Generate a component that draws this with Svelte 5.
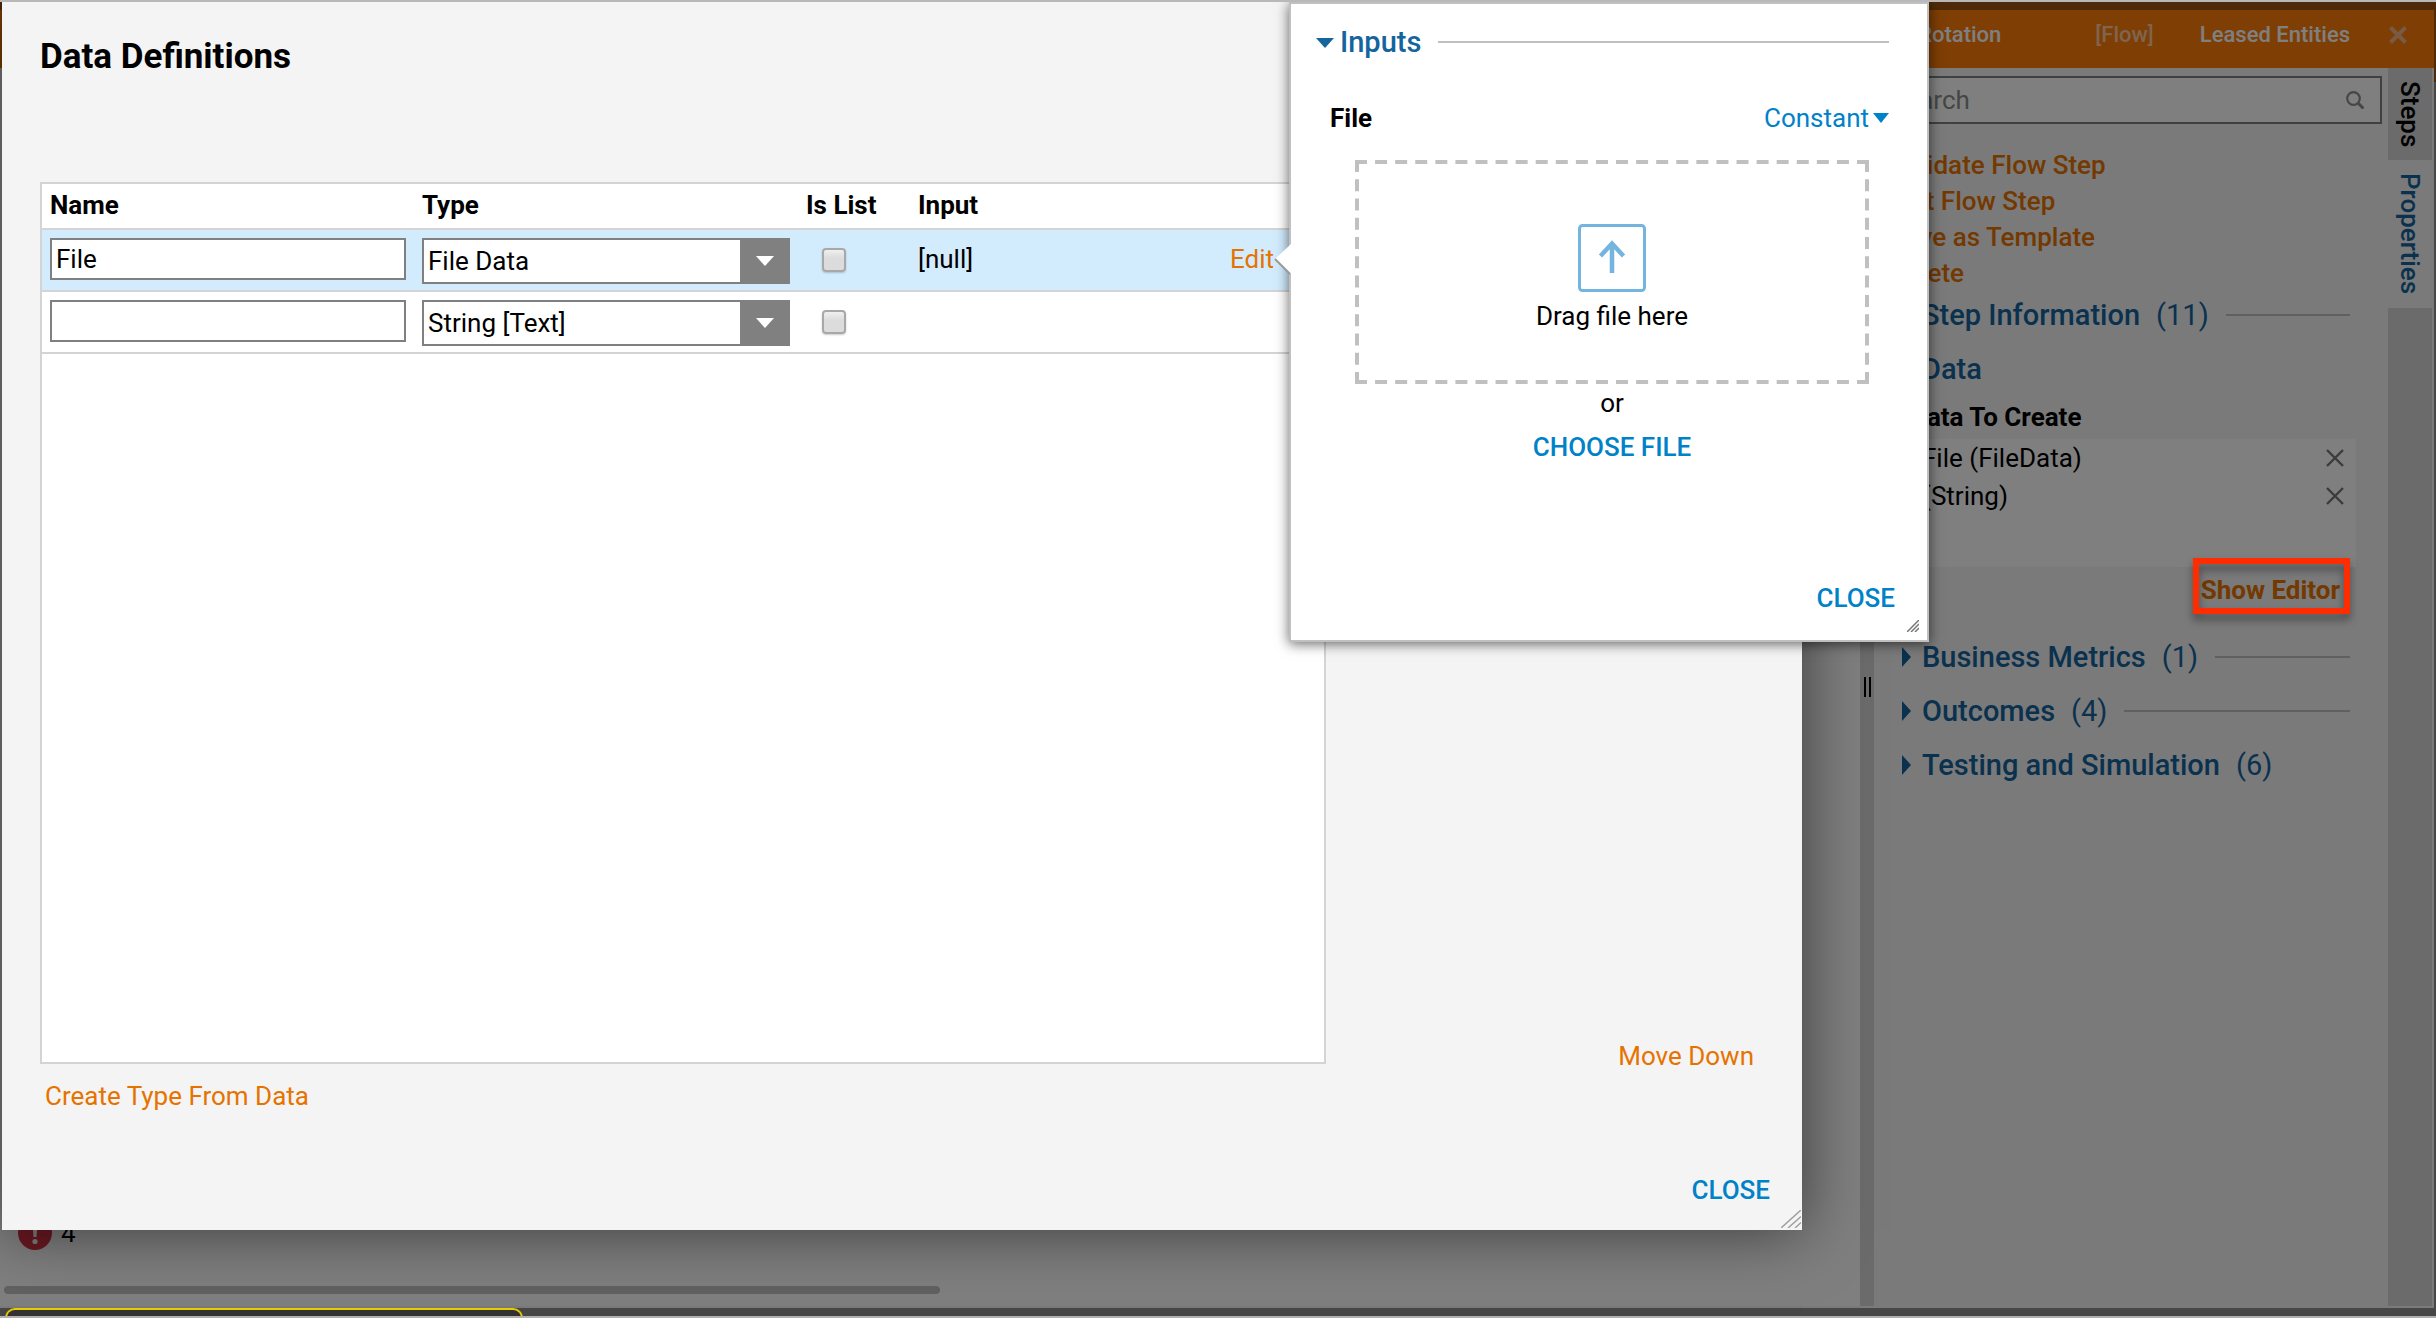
<script lang="ts">
  type Row = { id: number; name: string; type: string; isList: boolean; input: string | null };

  const TYPES = ["File Data", "String [Text]"];
  const ACTIONS = ["Validate Flow Step", "Edit Flow Step", "Save as Template", "Delete"];
  const SECTIONS = [
    { title: "Business Metrics", count: 1, rule: true },
    { title: "Outcomes", count: 4, rule: true },
    { title: "Testing and Simulation", count: 6, rule: false },
  ];

  let rows = $state<Row[]>([
    { id: 1, name: "File", type: "File Data", isList: false, input: "[null]" },
    { id: 2, name: "", type: "String [Text]", isList: false, input: null },
  ]);
  let created = $state(["File (FileData)", "(String)"]);
  let selected = $state(1);
  let search = $state("");

  function removeCreated(item: string): void {
    created = created.filter((c) => c !== item);
  }
</script>

{#snippet sectionHead(title: string, count: number | null, rule: boolean, open: boolean)}
  <button type="button" class="section" aria-expanded={open}>
    {#if open}
      <svg class="tri" width="18" height="20" viewBox="0 0 18 20"><path d="M0 6h18l-9 10z" /></svg>
    {:else}
      <svg class="tri" width="9" height="20" viewBox="0 0 9 20"><path d="M0 0l9 10-9 10z" /></svg>
    {/if}
    <span>{title}</span>
    {#if count !== null}<span class="count">({count})</span>{/if}
    {#if rule}<span class="rule"></span>{/if}
  </button>
{/snippet}

<div class="screen">
  <div class="frame">
    <header>
      <span class="flow-name">Rotation</span>
      <span class="kind">[Flow]</span>
      <span class="folder">Leased Entities</span>
      <button type="button" aria-label="Close flow">
        <svg width="18" height="18" viewBox="0 0 18 18"><path d="M1.500 1.500l15 15M16.500 1.500l-15 15" stroke="#f0b48a" stroke-width="4" /></svg>
      </button>
    </header>

    <div class="workspace">
      <main>
        <div class="errors">
          <svg width="34" height="34" viewBox="0 0 34 34">
            <circle cx="17" cy="17" r="17" fill="#d63344" />
            <path d="M14.500 7h5l-1 14h-3z" fill="#fff" /><circle cx="17" cy="25.500" r="2.600" fill="#fff" />
          </svg>
          <span>4</span>
        </div>
        <div class="scroll"></div>
      </main>

      <div class="splitter"><span></span><span></span></div>

      <aside>
        <div class="search">
          <input type="text" placeholder="Search" aria-label="Search properties" bind:value={search} />
          <svg width="18" height="18" viewBox="0 0 18 18" fill="none" stroke="#8c8c8c" stroke-width="2.200">
            <circle cx="7.500" cy="7.500" r="6.300" /><path d="M12 12l5.500 5.500" stroke-width="3" />
          </svg>
        </div>
        <nav>
          {#each ACTIONS as action}
            <a href="#action">{action}</a>
          {/each}
        </nav>
        <div class="sections">
          {@render sectionHead("Step Information", 11, true, false)}
          {@render sectionHead("Data", null, false, false)}
        </div>
        <div class="data">
          <h3>Data To Create</h3>
          <ul>
            {#each created as item}
              <li>
                <span>{item}</span>
                <button type="button" aria-label="Remove {item}" onclick={() => removeCreated(item)}>
                  <svg width="18" height="18" viewBox="0 0 18 18"><path d="M1 1l16 16M17 1L1 17" stroke="#777" stroke-width="2.400" /></svg>
                </button>
              </li>
            {/each}
          </ul>
          <div class="show">
            <button type="button">Show Editor</button>
            <span class="highlight"></span>
          </div>
        </div>
        <div class="sections">
          {#each SECTIONS as s}
            {@render sectionHead(s.title, s.count, s.rule, false)}
          {/each}
        </div>
      </aside>

      <div class="tabs" role="tablist">
        <button type="button" role="tab" aria-selected="false">Steps</button>
        <button type="button" role="tab" aria-selected="true" class="on">Properties</button>
      </div>
    </div>
  </div>

  <div class="dim"></div>
  <div class="toast"></div>

  <section class="dialog" role="dialog" aria-labelledby="dd-title">
    <h1 id="dd-title">Data Definitions</h1>
    <div class="body">
      <div class="panel">
        <table>
          <thead>
            <tr>
              <th class="c-name">Name</th>
              <th class="c-type">Type</th>
              <th class="c-list">Is List</th>
              <th>Input</th>
            </tr>
          </thead>
          <tbody>
            {#each rows as row (row.id)}
              <tr class:selected={row.id === selected} onclick={() => (selected = row.id)}>
                <td><input class="text" type="text" aria-label="Name" bind:value={row.name} /></td>
                <td>
                  <div class="select">
                    <select aria-label="Type" bind:value={row.type}>
                      {#each TYPES as t}<option>{t}</option>{/each}
                    </select>
                    <svg width="18" height="10" viewBox="0 0 18 10"><path d="M0 0h18l-9 10z" fill="#fff" /></svg>
                  </div>
                </td>
                <td><input class="check" type="checkbox" aria-label="Is List" bind:checked={row.isList} /></td>
                <td>
                  {#if row.input}
                    <div class="value"><span>{row.input}</span><a href="#edit">Edit</a></div>
                  {/if}
                </td>
              </tr>
            {/each}
          </tbody>
        </table>
      </div>
      <div class="side"><a href="#down">Move Down</a></div>
    </div>
    <div class="create"><a href="#create">Create Type From Data</a></div>
    <footer><button type="button" class="flat">CLOSE</button></footer>
    <svg class="grip" width="20" height="18" viewBox="0 0 20 18" stroke="#a0a0a0" stroke-width="1.500">
      <path d="M0 18L20 0M7 18L20 6.500M14 18l6-5.500" />
    </svg>
  </section>

  <section class="popover" role="dialog" aria-label="Inputs">
    <svg class="pointer" width="17" height="32" viewBox="0 0 17 32">
      <path d="M17 1L1 16l16 15z" fill="#fff" /><path d="M1 16l15 15" stroke="#999" stroke-width="2" />
    </svg>
    {@render sectionHead("Inputs", null, true, true)}
    <div class="field">
      <h2>File</h2>
      <button type="button">
        Constant
        <svg width="16" height="10" viewBox="0 0 16 10"><path d="M0 0h16l-8 10z" fill="#0082c8" /></svg>
      </button>
    </div>
    <div class="upload">
      <div class="drop">
        <svg class="dashes" stroke="#c0c0c0" stroke-width="8">
          <line x1="0" y1="0" x2="100%" y2="0" stroke-dasharray="12 8.080" />
          <line x1="0" y1="100%" x2="100%" y2="100%" stroke-dasharray="12 8.080" />
          <line x1="0" y1="0" x2="0" y2="100%" stroke-dasharray="12 7.270" />
          <line x1="100%" y1="0" x2="100%" y2="100%" stroke-dasharray="12 7.270" />
        </svg>
        <svg width="68" height="68" viewBox="0 0 68 68" fill="none" stroke="#74b5e0">
          <rect x="1.500" y="1.500" width="65" height="65" rx="3" stroke-width="3" />
          <path d="M34 49V19M22.500 32L34 19.500 45.500 32" stroke-width="4.500" />
        </svg>
        <span>Drag file here</span>
      </div>
      <span class="or">or</span>
      <button type="button" class="flat">CHOOSE FILE</button>
    </div>
    <footer><button type="button" class="flat">CLOSE</button></footer>
    <svg class="grip" width="12" height="12" viewBox="0 0 12 12" stroke="#777" stroke-width="1.500">
      <path d="M0 12L12 0M4 12l8-8M8 12l4-4" />
    </svg>
  </section>
</div>

<style>
  :global(body) { margin: 0; background: #959595; }
  .screen { position: relative; display: flex; flex-direction: column; box-sizing: border-box; min-height: 100vh; border-top: 2px solid #b8b8b8; border-bottom: 2px solid #b0b0b0; background: linear-gradient(#9e5410 80px, #8e8e8e 80px); font: 26px/32px Roboto, sans-serif; color: #000; overflow: hidden; }
  button { padding: 0; border: 0; background: none; font: inherit; color: inherit; cursor: pointer; }
  a { color: #e67300; text-decoration: none; }
  h1, h2, h3, ul { margin: 0; padding: 0; font: inherit; list-style: none; }
  svg { display: block; flex: none; }

  /* flow designer behind the dialogs */
  .frame { display: flex; flex: 1; flex-direction: column; margin: 8px 2px 8px 0; background: #fff; }
  header { display: flex; align-items: center; justify-content: flex-end; height: 58px; padding-right: 27px; padding-bottom: 8px; box-sizing: border-box; background: #fc7c08; color: #fff; font-size: 22px; font-weight: 500; }
  .flow-name { margin-right: 94px; }
  .kind { margin-right: 46px; color: #ffc8a0; }
  .folder { margin-right: 39px; }
  .workspace { display: flex; flex: 1; border: solid #f4f4f4; border-width: 0 2px 2px 0; }
  main { display: flex; flex: 1; flex-direction: column; justify-content: flex-end; padding: 0 0 12px 4px; }
  .errors { display: flex; align-items: center; gap: 9px; padding-left: 14px; margin-bottom: 36px; }
  .scroll { width: calc(50% + 8px); height: 8px; border-radius: 4px; background: #c2c2c2; }
  .splitter { display: flex; align-items: center; justify-content: center; gap: 3px; width: 14px; background: #d6d6d6; }
  .splitter span { width: 2px; height: 20px; background: #000; }

  aside { width: 514px; box-sizing: border-box; padding: 8px 6px; background: #f4f4f4; }
  .search { display: flex; align-items: center; height: 48px; box-sizing: border-box; padding: 0 16px 0 8px; border: 2px solid #808080; background: #fff; }
  .search input { flex: 1; min-width: 0; padding: 0; border: 0; outline: 0; background: none; font: inherit; }
  .search input::placeholder { color: #8c8c8c; }
  nav { display: flex; flex-direction: column; padding: 23px 10px 8px; font-weight: 500; line-height: 36px; }
  .sections { display: flex; flex-direction: column; gap: 22px; padding: 0 32px 0 22px; }
  .section { display: flex; align-items: center; width: 100%; color: #14649e; font-size: 29px; font-weight: 500; }
  .tri { margin-right: 11px; fill: #14649e; }
  .count { margin-left: 16px; font-weight: 400; }
  .rule { flex: 1; height: 2px; margin-left: 17px; background: #c0c0c0; }
  .data { padding: 16px 26px 35px 30px; }
  h3 { margin-bottom: 6px; font-weight: 700; }
  ul { height: 128px; background: #fff; }
  li { display: flex; align-items: center; justify-content: space-between; height: 38px; padding: 0 12px; }
  .show { position: relative; display: flex; width: fit-content; margin: 7px 16px 0 auto; color: #e67300; font-weight: 700; }
  .highlight { position: absolute; z-index: 2; inset: -16px -10px -8px -8px; border: 6px solid #ff2c00; filter: drop-shadow(0 6px 4px rgba(0, 0, 0, .4)); pointer-events: none; }

  .tabs { display: flex; flex-direction: column; width: 44px; background: #d6d6d6; }
  .tabs button { box-sizing: border-box; width: 44px; padding: 13px 0; writing-mode: vertical-rl; font-weight: 500; line-height: 44px; }
  .tabs .on { background: #f4f4f4; color: #14649e; }

  .dim { position: absolute; z-index: 1; inset: 0; background: rgba(0, 0, 0, .5); pointer-events: none; }
  .toast { position: absolute; z-index: 2; bottom: -2px; left: 5px; width: 518px; height: 10px; box-sizing: border-box; border: 2px solid #e6cc00; border-bottom: 0; border-radius: 12px 12px 0 0; background: #333; }

  /* data definitions */
  .dialog { position: absolute; z-index: 3; inset: 0 634px 86px 2px; display: flex; flex-direction: column; padding: 35px 0 24px 38px; background: #f4f4f4; box-shadow: 0 0 60px rgba(0, 0, 0, .55); }
  h1 { margin-bottom: 105px; font-size: 35px; font-weight: 700; line-height: 40px; }
  .body { display: flex; flex: 1; }
  .panel { flex: 1; margin-bottom: 8px; border: 2px solid #d4d4d4; background: #fff; }
  .side { display: flex; align-items: flex-end; justify-content: flex-end; width: 476px; box-sizing: border-box; padding-right: 48px; }
  table { width: 100%; border-collapse: separate; border-spacing: 0; table-layout: fixed; }
  .c-name { width: 372px; }
  .c-type { width: 384px; }
  .c-list { width: 112px; }
  th, td { box-sizing: border-box; padding: 0 8px; border-bottom: 2px solid #d4d4d4; text-align: left; }
  th { height: 46px; padding-bottom: 3px; font-weight: 700; }
  td { height: 62px; padding-top: 8px; vertical-align: top; }
  .selected td { background: #d2ecfe; }
  .text { display: block; box-sizing: border-box; width: 356px; height: 42px; padding: 0 4px; border: 2px solid #808080; border-radius: 0; background: #fff; font: inherit; }
  .select { display: grid; align-items: center; width: 368px; }
  .select > * { grid-area: 1 / 1; }
  .select svg { justify-self: end; margin-right: 16px; pointer-events: none; }
  select { appearance: none; box-sizing: border-box; width: 100%; height: 46px; padding: 0 56px 0 4px; border: 2px solid #808080; border-radius: 0; background: linear-gradient(to left, #808080 48px, #fff 48px); color: #000; font: inherit; }
  .check { appearance: none; display: block; width: 24px; height: 24px; margin: 10px 0 0 16px; border: 2px solid #a8a8a8; border-radius: 4px; background: linear-gradient(#f0f0f0, #dcdcdc 40%); box-shadow: 0 1px 2px rgba(0, 0, 0, .2); box-sizing: border-box; }
  .value { display: flex; justify-content: space-between; padding-right: 42px; line-height: 42px; }
  .create { padding-left: 5px; margin: 8px 0 62px; }
  footer { display: flex; justify-content: flex-end; padding-right: 32px; }
  .flat { color: #0082c8; font-weight: 500; }
  .grip { position: absolute; right: 1px; bottom: 2px; }

  /* input editor popover */
  .popover { position: absolute; z-index: 4; top: 0; right: 507px; width: 640px; box-sizing: border-box; padding: 22px 0 26px 25px; border: 2px solid #c0c0c0; background: #fff; box-shadow: 0 2px 12px rgba(0, 0, 0, .6); }
  .pointer { position: absolute; top: 239px; left: -17px; }
  .popover .section { width: calc(100% - 38px); }
  .popover .tri { margin-right: 6px; }
  .field { display: flex; justify-content: space-between; padding: 44px 38px 26px 14px; }
  .field button { display: flex; align-items: center; gap: 4px; color: #0082c8; }
  h2 { font-weight: 700; }
  .upload { display: flex; flex-direction: column; align-items: center; padding: 0 58px 0 39px; }
  .drop { position: relative; display: flex; flex-direction: column; align-items: center; gap: 8px; width: 100%; box-sizing: border-box; padding: 64px 0 52px; }
  .dashes { position: absolute; inset: 0; width: 100%; height: 100%; }
  .or { margin: 3px 0 12px; }
  .popover footer { margin-top: 119px; }
  .popover .grip { right: 8px; bottom: 8px; }
</style>
